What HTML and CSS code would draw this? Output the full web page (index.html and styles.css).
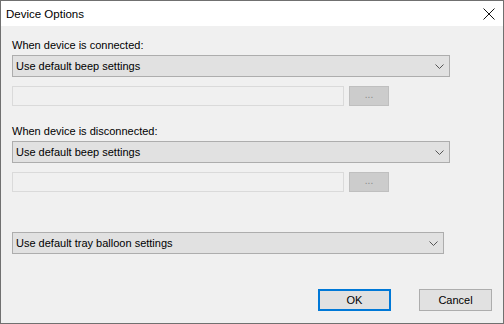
FILE: index.html
```html
<!DOCTYPE html>
<html>

<head>
  <title>Device Options</title>
  <link rel="stylesheet" href="styles.css">
</head>

<body>
  <div class="window">
    <div class="titlebar">
      <span class="title">Device Options</span>
      <span class="close">
        <svg width="12" height="12" viewBox="0 0 12 12">
          <path d="M0.5 0.5 L11.5 11.5 M11.5 0.5 L0.5 11.5" stroke="#111" stroke-width="1" fill="none" />
        </svg>
      </span>
    </div>
    <div class="content">
      <div class="label first">When device is connected:</div>
      <div class="combo">
        <span>Use default beep settings</span>
        <svg class="chevron" width="9" height="5" viewBox="0 0 9 5">
          <path d="M0.5 0.5 L4.5 4.5 L8.5 0.5" stroke="#555" stroke-width="1" fill="none" />
        </svg>
      </div>
      <div class="file-row">
        <div class="field"></div>
        <div class="browse">...</div>
      </div>

      <div class="label second">When device is disconnected:</div>
      <div class="combo">
        <span>Use default beep settings</span>
        <svg class="chevron" width="9" height="5" viewBox="0 0 9 5">
          <path d="M0.5 0.5 L4.5 4.5 L8.5 0.5" stroke="#555" stroke-width="1" fill="none" />
        </svg>
      </div>
      <div class="file-row">
        <div class="field"></div>
        <div class="browse">...</div>
      </div>

      <div class="combo balloon">
        <span>Use default tray balloon settings</span>
        <svg class="chevron" width="9" height="5" viewBox="0 0 9 5">
          <path d="M0.5 0.5 L4.5 4.5 L8.5 0.5" stroke="#555" stroke-width="1" fill="none" />
        </svg>
      </div>

      <div class="buttons">
        <button class="btn default">OK</button>
        <button class="btn">Cancel</button>
      </div>
    </div>
  </div>
</body>

</html>
```

FILE: styles.css
```css
* {
  box-sizing: border-box;
  margin: 0;
  padding: 0;
}

body {
  font-family: 'Liberation Sans', Arial, sans-serif;
  font-size: 11px;
  color: #000000;
  background-color: #f0f0f0;
}

.window {
  width: 504px;
  height: 324px;
  border: 1px solid #707070;
  background-color: #f0f0f0;
  display: flex;
  flex-direction: column;
}

.titlebar {
  height: 25px;
  background-color: #ffffff;
  display: flex;
  align-items: center;
  justify-content: space-between;
  padding: 0 8px 0 5px;
}

.title {
  font-size: 11.5px;
  line-height: 16px;
}

.close {
  display: flex;
  padding-top: 1px;
}

.content {
  padding-left: 11px;
}

.label {
  height: 16px;
  line-height: 16px;
}

.label.first {
  margin-top: 11px;
}

.label.second {
  margin-top: 17px;
}

.combo {
  margin-top: 2px;
  width: 438px;
  height: 22px;
  background-color: #e1e1e1;
  border: 1px solid #adadad;
  display: flex;
  align-items: center;
  justify-content: space-between;
  padding: 0 5px 0 3px;
  line-height: 16px;
}

.combo.balloon {
  width: 432px;
  margin-top: 40px;
}

.chevron {
  display: block;
}

.file-row {
  display: flex;
  margin-top: 9px;
  height: 20px;
}

.field {
  width: 332px;
  height: 20px;
  border: 1px solid #dadada;
  background-color: #f0f0f0;
}

.browse {
  width: 40px;
  height: 20px;
  margin-left: 5px;
  background-color: #cccccc;
  border: 1px solid #bfbfbf;
  color: #8a8a8a;
  text-align: center;
  line-height: 16px;
  font-size: 10px;
}

.buttons {
  display: flex;
  justify-content: flex-end;
  gap: 28px;
  margin-top: 35px;
  padding-right: 11px;
}

.btn {
  width: 73px;
  height: 22px;
  font-family: 'Liberation Sans', Arial, sans-serif;
  font-size: 11px;
  background-color: #e1e1e1;
  border: 1px solid #adadad;
  color: #000000;
}

.btn.default {
  border: 2px solid #0078d7;
}
```
